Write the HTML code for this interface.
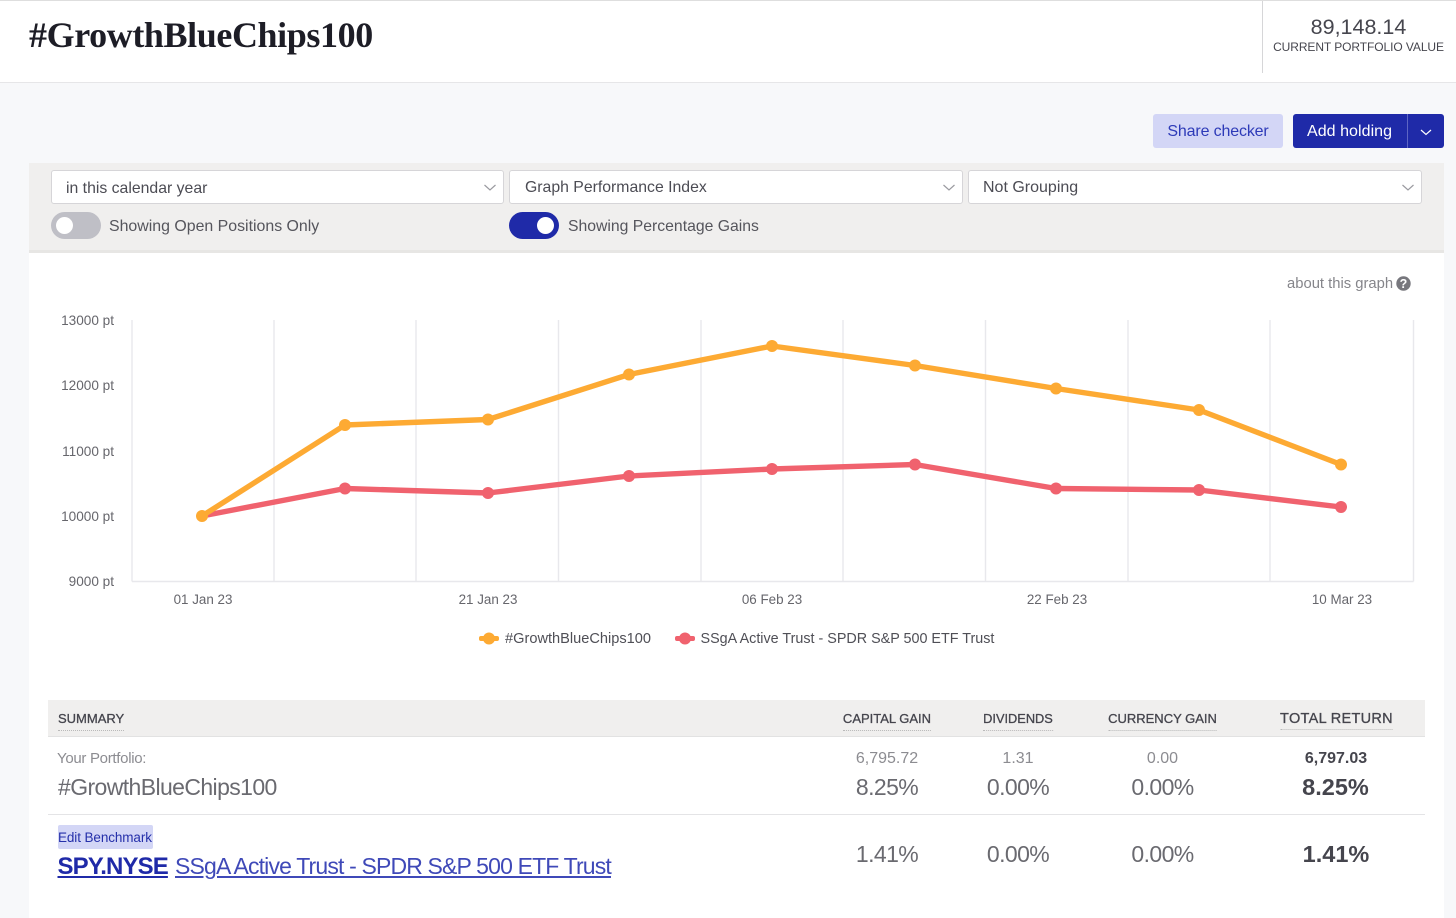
<!DOCTYPE html>
<html>
<head>
<meta charset="utf-8">
<style>
html,body{margin:0;padding:0}
body{width:1456px;height:918px;overflow:hidden;position:relative;background:#f7f8fa;font-family:"Liberation Sans",sans-serif;color:#4a4a52}
.a{position:absolute;white-space:nowrap}
.c{transform:translateX(-50%)}
.sel{position:absolute;top:170px;height:32px;background:#fff;border:1px solid #d6d5d8;border-radius:3px;box-sizing:content-box}
.sel span{position:absolute;top:8px;font-size:15.8px;line-height:18px;color:#4c4c54;white-space:nowrap}
.sel svg{position:absolute;right:6px;top:12px}
.th{font-size:13px;line-height:16px;color:#45454d;font-weight:400;-webkit-text-stroke:.3px #45454d;border-bottom:1px dotted #b9b9b9;padding-bottom:3px}
.big{font-size:23px;line-height:28px;color:#6a6a70;letter-spacing:-.6px}
.small{font-size:16px;line-height:18px;color:#8c8c91}
.bold{font-weight:700;color:#45454d;letter-spacing:0}
</style>
</head>
<body>
<!-- header -->
<div class="a" style="left:0;top:0;width:1456px;height:83px;background:#fff;border-top:1px solid #dedede;border-bottom:1px solid #e6e6e8;box-sizing:border-box"></div>
<div class="a" style="left:29px;top:14px;font-family:'Liberation Serif',serif;font-weight:700;font-size:36px;line-height:42px;color:#1d1d26;letter-spacing:-.4px">#GrowthBlueChips100</div>
<div class="a" style="left:1262px;top:1px;width:1px;height:72px;background:#d6d6d8"></div>
<div class="a c" style="left:1358.5px;top:14px;font-size:21.5px;line-height:26px;color:#46464e">89,148.14</div>
<div class="a c" style="left:1358.5px;top:40px;font-size:12px;line-height:15px;color:#46464e;letter-spacing:-.08px">CURRENT PORTFOLIO VALUE</div>

<!-- buttons -->
<div class="a" style="left:1153px;top:114px;width:130px;height:34px;background:#d3d6f6;border-radius:3px;text-align:center;font-size:16px;line-height:35px;color:#2d3ab8;letter-spacing:-.15px">Share checker</div>
<div class="a" style="left:1293px;top:114px;width:151px;height:34px;background:#1f2aa8;border-radius:3px"></div>
<div class="a" style="left:1307px;top:114px;font-size:16px;line-height:35px;color:#fff;letter-spacing:.05px">Add holding</div>
<div class="a" style="left:1407px;top:114px;width:1px;height:34px;background:#5e66c4"></div>
<svg class="a" style="left:1419px;top:128px" width="14" height="9" viewBox="0 0 14 9"><path d="M2 2 L7 6.5 L12 2" fill="none" stroke="#fff" stroke-width="1.2"/></svg>

<!-- filter bar -->
<div class="a" style="left:29px;top:163px;width:1415px;height:90px;background:#f0efee;border-bottom:3px solid #e7e6e4;box-sizing:border-box"></div>
<div class="sel" style="left:51px;width:451px"><span style="left:14px;top:9px">in this calendar year</span><svg width="14" height="9" viewBox="0 0 14 9"><path d="M1.5 2 L7 7 L12.5 2" fill="none" stroke="#9a9aa0" stroke-width="1.2"/></svg></div>
<div class="sel" style="left:509px;width:452px"><span style="left:15px;top:8px">Graph Performance Index</span><svg width="14" height="9" viewBox="0 0 14 9"><path d="M1.5 2 L7 7 L12.5 2" fill="none" stroke="#9a9aa0" stroke-width="1.2"/></svg></div>
<div class="sel" style="left:968px;width:452px"><span style="left:14px;top:8px;font-size:16px">Not Grouping</span><svg width="14" height="9" viewBox="0 0 14 9"><path d="M1.5 2 L7 7 L12.5 2" fill="none" stroke="#9a9aa0" stroke-width="1.2"/></svg></div>

<div class="a" style="left:51px;top:212px;width:50px;height:27px;border-radius:14px;background:#bfbfc6"></div>
<div class="a" style="left:56px;top:217px;width:17px;height:17px;border-radius:50%;background:#fff"></div>
<div class="a" style="left:109px;top:218px;font-size:15.9px;line-height:18px;color:#55555c">Showing Open Positions Only</div>
<div class="a" style="left:509px;top:212px;width:50px;height:27px;border-radius:14px;background:#1f2aa8"></div>
<div class="a" style="left:537px;top:217px;width:17px;height:17px;border-radius:50%;background:#fff"></div>
<div class="a" style="left:568px;top:218px;font-size:15.75px;line-height:18px;color:#55555c">Showing Percentage Gains</div>

<!-- main panel -->
<div class="a" style="left:29px;top:253px;width:1415px;height:665px;background:#fff"></div>
<div class="a" style="left:1287px;top:275px;font-size:14.8px;line-height:18px;color:#85858a">about this graph</div>
<svg class="a" style="left:1396px;top:276px" width="15" height="15" viewBox="0 0 15 15"><circle cx="7.5" cy="7.5" r="7.2" fill="#77777d"/><text x="7.5" y="12" text-anchor="middle" font-family="Liberation Sans" font-weight="700" font-size="12.5" fill="#fff">?</text></svg>

<!-- chart -->
<svg class="a" style="left:0;top:0" width="1456" height="660" viewBox="0 0 1456 660">
<g stroke="#e8e8ec" stroke-width="1.4" fill="none">
<path d="M132 320V581.5M274 320V581.5M416 320V581.5M558.5 320V581.5M701 320V581.5M843 320V581.5M985.5 320V581.5M1128 320V581.5M1270 320V581.5M1413.5 320V581.5M132 581.5H1413.5"/>
</g>
<polyline fill="none" stroke="#f0626e" stroke-width="5.4" stroke-linejoin="round" points="202,516 345,488.5 488,493 629,476 772,469 915,464.5 1056,488.5 1199,490 1341,507"/>
<g fill="#f0626e"><circle cx="345" cy="488.5" r="6"/><circle cx="488" cy="493" r="6"/><circle cx="629" cy="476" r="6"/><circle cx="772" cy="469" r="6"/><circle cx="915" cy="464.5" r="6"/><circle cx="1056" cy="488.5" r="6"/><circle cx="1199" cy="490" r="6"/><circle cx="1341" cy="507" r="6"/></g>
<polyline fill="none" stroke="#fdaa33" stroke-width="5.4" stroke-linejoin="round" points="202,516 345,425 488,419.5 629,374.5 772,346 915,365.5 1056,388.5 1199,410 1341,464.5"/>
<g fill="#fdaa33"><circle cx="202" cy="516" r="6"/><circle cx="345" cy="425" r="6"/><circle cx="488" cy="419.5" r="6"/><circle cx="629" cy="374.5" r="6"/><circle cx="772" cy="346" r="6"/><circle cx="915" cy="365.5" r="6"/><circle cx="1056" cy="388.5" r="6"/><circle cx="1199" cy="410" r="6"/><circle cx="1341" cy="464.5" r="6"/></g>
<g font-family="Liberation Sans" font-size="13.6" fill="#66666c" text-anchor="end">
<text x="114" y="325">13000 pt</text><text x="114" y="390">12000 pt</text><text x="114" y="456">11000 pt</text><text x="114" y="521">10000 pt</text><text x="114" y="586">9000 pt</text>
</g>
<g font-family="Liberation Sans" font-size="13.4" fill="#66666c" text-anchor="middle">
<text x="203" y="604">01 Jan 23</text><text x="488" y="604">21 Jan 23</text><text x="772" y="604">06 Feb 23</text><text x="1057" y="604">22 Feb 23</text><text x="1342" y="604">10 Mar 23</text>
</g>
<rect x="479" y="636" width="20" height="5" rx="2" fill="#fdaa33"/><circle cx="489" cy="638.5" r="6" fill="#fdaa33"/>
<rect x="675" y="636" width="20" height="5" rx="2" fill="#f0626e"/><circle cx="685" cy="638.5" r="6" fill="#f0626e"/>
<g font-family="Liberation Sans" fill="#4f4f56">
<text x="505" y="643" font-size="14.6">#GrowthBlueChips100</text><text x="700.5" y="643" font-size="14.35">SSgA Active Trust - SPDR S&amp;P 500 ETF Trust</text>
</g>
</svg>

<!-- table -->
<div class="a" style="left:48px;top:700px;width:1377px;height:37px;background:#f0efee;border-bottom:1px solid #e2e2e2;box-sizing:border-box"></div>
<div class="a" style="left:48px;top:814px;width:1377px;height:1px;background:#e4e4e6"></div>

<div class="a th" style="left:58px;top:711px">SUMMARY</div>
<div class="a th c" style="left:887px;top:711px">CAPITAL GAIN</div>
<div class="a th c" style="left:1018px;top:711px;font-size:12.8px">DIVIDENDS</div>
<div class="a th c" style="left:1162.5px;top:711px">CURRENCY GAIN</div>
<div class="a th c" style="left:1336.5px;top:711px;font-size:14.5px;letter-spacing:.3px;line-height:16px;padding-bottom:2px">TOTAL RETURN</div>

<div class="a small" style="left:57px;top:750px;font-size:15px;letter-spacing:-.3px">Your Portfolio:</div>
<div class="a big" style="left:58px;top:773px">#GrowthBlueChips100</div>
<div class="a small c" style="left:887px;top:750px">6,795.72</div>
<div class="a small c" style="left:1018px;top:750px">1.31</div>
<div class="a small c" style="left:1162.5px;top:750px">0.00</div>
<div class="a small c bold" style="left:1336px;top:750px">6,797.03</div>
<div class="a big c" style="left:887px;top:773px">8.25%</div>
<div class="a big c" style="left:1018px;top:773px">0.00%</div>
<div class="a big c" style="left:1162.5px;top:773px">0.00%</div>
<div class="a big c bold" style="left:1335.5px;top:773px;font-size:23.5px">8.25%</div>

<div class="a" style="left:58px;top:825px;width:95px;height:24px;background:#d3d6f6;border-radius:2px"></div>
<div class="a" style="left:58px;top:830px;font-size:13.5px;line-height:16px;color:#2530aa;letter-spacing:-.1px">Edit Benchmark</div>
<div class="a" style="left:57.5px;top:853px;font-size:24px;line-height:28px;color:#1f2aa8;font-weight:700;text-decoration:underline;letter-spacing:-.875px">SPY.NYSE</div>
<div class="a" style="left:175px;top:852px;font-size:23px;line-height:28px;color:#3f49b8;text-decoration:underline;letter-spacing:-.84px">SSgA Active Trust - SPDR S&amp;P 500 ETF Trust</div>

<div class="a big c" style="left:887px;top:840px">1.41%</div>
<div class="a big c" style="left:1018px;top:840px">0.00%</div>
<div class="a big c" style="left:1162.5px;top:840px">0.00%</div>
<div class="a big c bold" style="left:1336px;top:840px;font-size:23.5px">1.41%</div>
</body>
</html>
